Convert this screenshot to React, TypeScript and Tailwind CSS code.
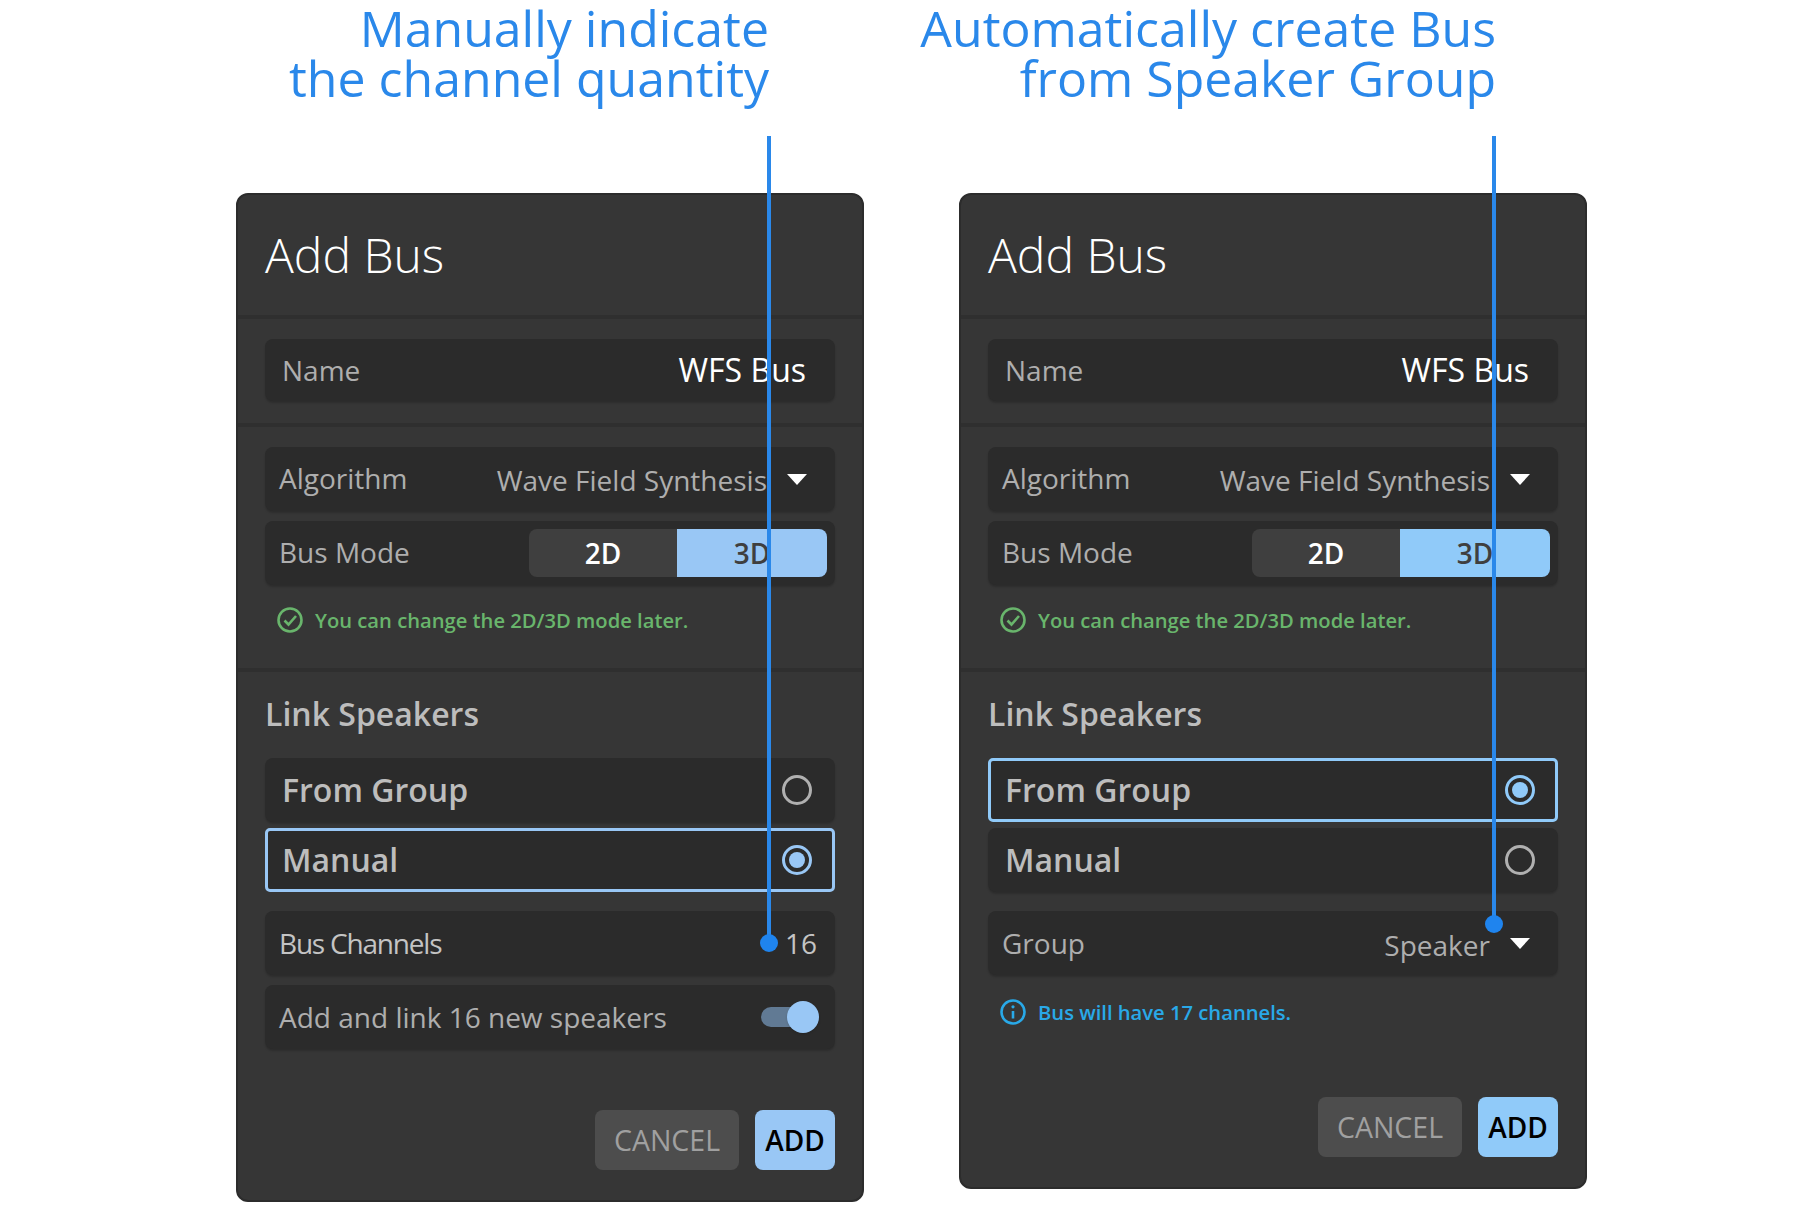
import React from "react";

const font = { fontFamily: '"Open Sans", "Noto Sans", sans-serif' };

function Caret() {
  return (
    <svg width="20" height="11" viewBox="0 0 20 11" className="shrink-0">
      <path d="M0 0H20L10 11Z" fill="#fff" />
    </svg>
  );
}

function Row({ children, className = "" }: { children: React.ReactNode; className?: string }) {
  return (
    <div className={`flex items-center justify-between h-[64px] rounded-lg bg-[#2b2b2b] shadow-[0_2px_2px_rgba(0,0,0,0.18)] ${className}`}>
      {children}
    </div>
  );
}

function Radio({ on, color }: { on: boolean; color: string }) {
  return (
    <span
      className={`flex items-center justify-center w-[30px] h-[30px] rounded-full border-[3px] ${on ? "" : "border-[#b0b0b0]"}`}
      style={on ? { borderColor: color } : undefined}
    >
      {on && <span className="w-[16px] h-[16px] rounded-full" style={{ background: color }} />}
    </span>
  );
}

function Choice({ label, on, color }: { label: string; on: boolean; color: string }) {
  return (
    <div
      className={`flex items-center justify-between h-[64px] bg-[#2b2b2b] ${on ? "border-[3px] rounded-[5px] pl-[14px] pr-[20px]" : "pl-[17px] pr-[23px] rounded-lg shadow-[0_2px_2px_rgba(0,0,0,0.18)]"}`}
      style={on ? { borderColor: color } : undefined}
    >
      <span className="text-[32px] font-semibold text-[#bdbdbd]">{label}</span>
      <Radio on={on} color={color} />
    </div>
  );
}

function Card({ mode }: { mode: "manual" | "group" }) {
  const manual = mode === "manual";
  const accent = manual ? "#99c7f5" : "#90caf9";
  return (
    <div className="flex flex-col w-[628px] rounded-xl bg-[#363636] border-2 border-[#2c2c2c]" style={font}>
      <div className="h-[124px] flex items-center pl-[27px] border-b-4 border-[#2f2f2f]">
        <span className="text-[48px] font-light text-white">Add Bus</span>
      </div>
      <div className="px-[27px] pt-[20px] pb-[22px] border-b-4 border-[#2f2f2f]">
        <Row className="!h-[62px] pl-[17px] pr-[29px]">
          <span className="text-[28px] font-normal text-[#aeaeae]">Name</span>
          <span className="text-[32px] font-normal text-white">WFS Bus</span>
        </Row>
      </div>
      <div className="flex flex-col px-[27px] pt-[20px] h-[245px] border-b-4 border-[#2f2f2f]">
        <Row className="pl-[14px] pr-[28px]">
          <span className="text-[28px] font-normal text-[#aeaeae] pb-[2px]">Algorithm</span>
          <div className="flex items-center gap-[20px]">
            <span className="text-[28px] font-normal text-[#aeaeae] pt-[2px]">Wave Field Synthesis</span>
            <Caret />
          </div>
        </Row>
        <Row className="mt-[10px] pl-[14px] pr-[8px]">
          <span className="text-[28px] font-normal text-[#aeaeae] pb-[2px]">Bus Mode</span>
          <div className="flex w-[298px] h-[48px] rounded-lg overflow-hidden text-[28px] font-semibold">
            <span className="w-[148px] flex items-center justify-center bg-[#3f3f3f] text-white">2D</span>
            <span className="w-[150px] flex items-center justify-center text-[#3f3f3f]" style={{ background: accent }}>3D</span>
          </div>
        </Row>
        <div className="flex items-center gap-[12px] pl-[12px] mt-[20px] text-[#69b56c]">
          <svg width="26" height="26" viewBox="0 0 26 26" fill="none" stroke="currentColor" strokeWidth="2.6">
            <circle cx="13" cy="13" r="11.5" />
            <path d="M7.5 13.5l4 4 7.5-8.5" />
          </svg>
          <span className="text-[20.2px] font-semibold">You can change the 2D/3D mode later.</span>
        </div>
      </div>
      <div className="flex flex-col px-[27px] pt-[20px] pb-[30px]">
        <span className="text-[32px] font-semibold text-[#bdbdbd] leading-[44px]">Link Speakers</span>
        <div className="flex flex-col gap-[6px] mt-[22px]">
          <Choice label="From Group" on={!manual} color={accent} />
          <Choice label="Manual" on={manual} color={accent} />
        </div>
        {manual ? (
          <>
            <Row className="mt-[19px] pl-[14px] pr-[18px]">
              <span className="text-[28px] font-normal text-[#c4c4c4] tracking-[-1.2px]">Bus Channels</span>
              <span className="text-[28px] font-normal text-[#c4c4c4]">16</span>
            </Row>
            <Row className="mt-[10px] pl-[14px] pr-[16px]">
              <span className="text-[28px] font-normal text-[#aeaeae]">Add and link 16 new speakers</span>
              <div className="relative w-[58px] h-[32px] flex items-center">
                <div className="w-[52px] h-[20px] rounded-full bg-[#617a94]" />
                <div className="absolute right-0 top-0 w-[32px] h-[32px] rounded-full shadow" style={{ background: accent }} />
              </div>
            </Row>
          </>
        ) : (
          <>
            <Row className="mt-[19px] pl-[14px] pr-[28px]">
              <span className="text-[28px] font-normal text-[#aeaeae]">Group</span>
              <div className="flex items-center gap-[20px]">
                <span className="text-[28px] font-normal text-[#aeaeae] pt-[4px]">Speaker</span>
                <Caret />
              </div>
            </Row>
            <div className="flex items-center gap-[12px] pl-[12px] mt-[22px] text-[#29a9e8]">
              <svg width="26" height="26" viewBox="0 0 26 26" fill="none" stroke="currentColor" strokeWidth="2.6">
                <circle cx="13" cy="13" r="11.5" />
                <path d="M13 12v7.5" />
                <circle cx="13" cy="7.8" r="1.6" fill="currentColor" stroke="none" />
              </svg>
              <span className="text-[20.2px] font-semibold">Bus will have 17 channels.</span>
            </div>
          </>
        )}
        <div className={`flex justify-end gap-[16px] ${manual ? "mt-[61px]" : "mt-[70px]"}`}>
          <button className="w-[144px] h-[60px] rounded-lg bg-[#4d4d4d] text-[28.5px] font-medium text-[#a0a0a0]">CANCEL</button>
          <button className="w-[80px] h-[60px] rounded-lg text-[28px] font-semibold text-black" style={{ background: accent }}>ADD</button>
        </div>
      </div>
    </div>
  );
}

function Column({ lines, mode, lineClass, dotClass }: { lines: string[]; mode: "manual" | "group"; lineClass: string; dotClass: string }) {
  return (
    <div className="relative w-[628px]">
      <h2 className={`flex flex-col items-end text-[50px] leading-[50px] font-normal text-[#2a88ea] h-[193px] pt-[3px] whitespace-nowrap ${mode === "manual" ? "pr-[95px]" : "pr-[91px]"}`} style={font}>
        <span>{lines[0]}</span>
        <span>{lines[1]}</span>
      </h2>
      <Card mode={mode} />
      <div className={`absolute w-[4px] bg-[#2a88ea] top-[136px] ${lineClass}`} />
      <div className={`absolute w-[18px] h-[18px] rounded-full bg-[#1f84ee] ${dotClass}`} />
    </div>
  );
}

export default function App() {
  return (
    <div className="flex items-start gap-[95px] w-[1801px] h-[1211px] pl-[236px] bg-white overflow-hidden">
      <Column lines={["Manually indicate", "the channel quantity"]} mode="manual" lineClass="left-[531px] h-[807px]" dotClass="left-[524px] top-[934px]" />
      <Column lines={["Automatically create Bus", "from Speaker Group"]} mode="group" lineClass="left-[533px] h-[788px]" dotClass="left-[526px] top-[915px]" />
    </div>
  );
}
